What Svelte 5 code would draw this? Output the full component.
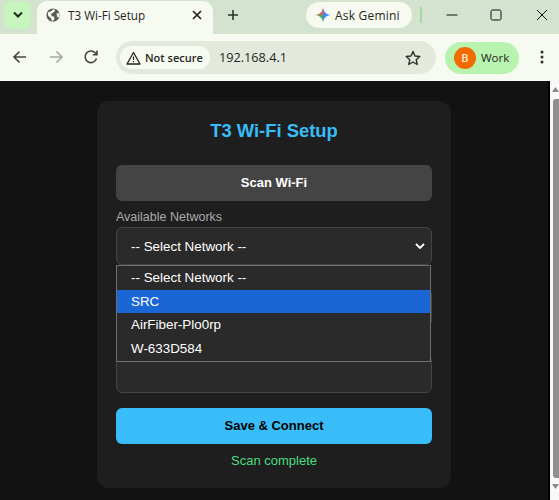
<script>
    let networks = ['-- Select Network --', 'SRC', 'AirFiber-Plo0rp', 'W-633D584'];
    let highlighted = 1;
</script>

<div class="window">
    <header class="chrome">
        <div class="tabstrip">
            <button class="tab-list" aria-label="Search tabs">
                <svg width="12" height="8" viewBox="0 0 12 8"><path d="M2 1.500 6 5.500 10 1.500" fill="none" stroke="#1c2a1c" stroke-width="2"/></svg>
            </button>
            <div class="tab">
                <svg class="globe" width="14" height="14" viewBox="0 0 16 16">
                    <circle cx="8" cy="8" r="7.500" fill="#545a56"/>
                    <path d="M2 5 6 3.500 9 1 10.500 3 8 5.500 5.500 7 7 9.500 9.500 10 9.500 13 7 15 5.500 11.500 2.500 9Z" fill="#f6faf0"/>
                    <path d="M12 6 15 6 15 10 13 11Z" fill="#f6faf0"/>
                </svg>
                <span class="tab-title">T3 Wi-Fi Setup</span>
                <svg class="tab-close" width="10" height="10" viewBox="0 0 10 10"><path d="M1 1 9 9M9 1 1 9" stroke="#222" stroke-width="1.700"/></svg>
            </div>
            <svg class="new-tab" width="12" height="12" viewBox="0 0 12 12"><path d="M6 1V11M1 6H11" stroke="#2b352b" stroke-width="1.600"/></svg>
            <div class="gemini">
                <svg width="16" height="16" viewBox="0 0 16 16">
                    <path d="M8 0C8.300 4.500 11 7.600 16 8L8 8Z" fill="#4285f4"/>
                    <path d="M16 8C11 8.400 8.300 11.500 8 16L8 8Z" fill="#3b8ff0"/>
                    <path d="M8 16C7.700 11.500 5 8.400 0 8L8 8Z" fill="#3fae5a"/>
                    <path d="M0 8C5 7.600 7.700 4.500 8 0L8 8Z" fill="#ea5a47"/>
                </svg>
                <span>Ask Gemini</span>
            </div>
            <span class="divider"></span>
            <div class="win-controls">
                <svg width="12" height="12" viewBox="0 0 12 12"><path d="M0.500 6H11.500" stroke="#111" stroke-width="1"/></svg>
                <svg width="12" height="12" viewBox="0 0 12 12"><rect x="1" y="1" width="10" height="10" rx="1.500" fill="none" stroke="#111" stroke-width="1"/></svg>
                <svg class="win-close" width="12" height="12" viewBox="0 0 12 12"><path d="M1 1 11 11M11 1 1 11" stroke="#111" stroke-width="1"/></svg>
            </div>
        </div>
        <div class="toolbar">
            <svg class="nav" width="16" height="16" viewBox="0 0 16 16"><path d="M14 8H2.500M7.500 2.500 2 8 7.500 13.500" fill="none" stroke="#3c463c" stroke-width="1.600"/></svg>
            <svg class="nav" width="16" height="16" viewBox="0 0 16 16"><path d="M2 8H13.500M8.500 2.500 14 8 8.500 13.500" fill="none" stroke="#a3aaa2" stroke-width="1.600"/></svg>
            <svg class="nav" width="16" height="16" viewBox="0 0 16 16"><path d="M13.500 9.500A5.800 5.800 0 1 1 12.200 3.800L14 5.500M14 1.500V5.700H9.800" fill="none" stroke="#3c463c" stroke-width="1.600"/></svg>
            <div class="omnibox">
                <div class="chip">
                    <svg width="15" height="14" viewBox="0 0 15 14"><path d="M7.500 1.500 14 13H1Z" fill="none" stroke="#222" stroke-width="1.300" stroke-linejoin="round"/><path d="M7.500 5.500V9M7.500 10V11.300" stroke="#222" stroke-width="1.200"/></svg>
                    <span class="raised">Not secure</span>
                </div>
                <span class="url raised">192.168.4.1</span>
                <svg class="star" width="16" height="16" viewBox="0 0 16 16"><path d="M8 1.500 10 6 14.800 6.500 11.200 9.700 12.200 14.500 8 12 3.800 14.500 4.800 9.700 1.200 6.500 6 6Z" fill="none" stroke="#2a332a" stroke-width="1.400" stroke-linejoin="round"/></svg>
            </div>
            <div class="profile">
                <span class="avatar">B</span>
                <span class="raised">Work</span>
            </div>
            <svg class="kebab" width="4" height="14" viewBox="0 0 4 14"><circle cx="2" cy="2" r="1.500" fill="#2a332a"/><circle cx="2" cy="7" r="1.500" fill="#2a332a"/><circle cx="2" cy="12" r="1.500" fill="#2a332a"/></svg>
        </div>
    </header>

    <div class="viewport">
        <main class="page">
            <section class="card">
                <h2>T3 Wi-Fi Setup</h2>
                <button class="btn scan">Scan Wi-Fi</button>
                <div class="label">Available Networks</div>
                <div class="select-wrap">
                    <div class="select">
                        <span>-- Select Network --</span>
                        <svg width="10" height="7" viewBox="0 0 10 7"><path d="M1 1 5 5 9 1" fill="none" stroke="#fff" stroke-width="1.800"/></svg>
                    </div>
                    <ul class="popup">
                        {#each networks as net, i}
                            <li class:active={i === highlighted}>{net}</li>
                        {/each}
                    </ul>
                </div>
                <div class="input ssid"></div>
                <div class="input pass"></div>
                <button class="btn save">Save &amp; Connect</button>
                <div class="status">Scan complete</div>
            </section>
        </main>
        <aside class="scrollbar">
            <svg width="7" height="5" viewBox="0 0 7 5"><path d="M3.500 0 7 5H0Z" fill="#8a8a8a"/></svg>
            <div class="thumb"></div>
            <svg width="7" height="5" viewBox="0 0 7 5"><path d="M0 0H7L3.500 5Z" fill="#8a8a8a"/></svg>
        </aside>
    </div>
</div>

<style>
    :global(body) {
        margin: 0;
        overflow: hidden;
    }

    .window {
        width: 559px;
        height: 500px;
        display: flex;
        flex-direction: column;
        font-family: 'Liberation Sans', Arial, sans-serif;
    }

    .chrome {
        font-family: 'Open Sans', sans-serif;
        color: #1f261f;
    }

    .tabstrip {
        height: 34px;
        background: #d3e3cf;
        display: flex;
        align-items: flex-start;
        position: relative;
    }

    .tab-list {
        width: 27px;
        height: 28px;
        margin: 1px 0 0 4px;
        padding: 0;
        border: none;
        border-radius: 8px;
        background: #c6f5bd;
        display: flex;
        align-items: center;
        justify-content: center;
    }

    .tab {
        width: 176px;
        height: 33px;
        margin: 1px 0 0 6px;
        padding: 0 9px 5px 9px;
        box-sizing: border-box;
        background: #f6faf0;
        border-radius: 10px 10px 0 0;
        display: flex;
        align-items: center;
    }

    .globe {
        flex: none;
    }

    .tab-title {
        margin-left: 8px;
        font-size: 11.700px;
        flex: 1;
        white-space: nowrap;
    }

    .tab-close {
        margin-right: 2px;
    }

    .new-tab {
        margin: 9px 0 0 14px;
    }

    .gemini {
        width: 106px;
        height: 26px;
        margin: 2px 0 0 67px;
        box-sizing: border-box;
        padding-left: 9px;
        border-radius: 13px;
        background: #f6faf0;
        display: flex;
        align-items: center;
        gap: 4px;
        font-size: 12px;
        font-weight: 500;
        letter-spacing: 0.2px;
    }

    .divider {
        width: 2px;
        height: 16px;
        margin: 7px 0 0 8px;
        background: #a4d9a0;
    }

    .win-controls {
        margin: 9px 0 0 24px;
        display: flex;
        gap: 32px;
    }

    .win-close {
        margin-left: 2px;
    }

    .toolbar {
        height: 47px;
        background: #f6faf0;
        display: flex;
        align-items: center;
        position: relative;
    }

    .nav {
        margin: 0 8px 1px 12px;
        flex: none;
    }

    .nav + .nav {
        margin-left: 12px;
        margin-right: 7px;
    }

    .raised {
        margin-bottom: 1px;
    }

    .omnibox {
        width: 320px;
        height: 33px;
        margin-left: 10px;
        box-sizing: border-box;
        padding: 0 15px 0 4px;
        background: #e3e9dd;
        border-radius: 17px;
        display: flex;
        align-items: center;
    }

    .chip {
        width: 90px;
        height: 23px;
        box-sizing: border-box;
        padding-left: 6px;
        background: #f6faf0;
        border-radius: 12px;
        display: flex;
        align-items: center;
        gap: 4px;
        font-size: 11px;
        font-weight: 600;
        white-space: nowrap;
    }

    .url {
        margin-left: 9px;
        font-size: 12.700px;
        flex: 1;
    }

    .profile {
        width: 74px;
        height: 32px;
        margin-left: 9px;
        box-sizing: border-box;
        padding-left: 9px;
        background: #b9f3b0;
        border-radius: 16px;
        display: flex;
        align-items: center;
        gap: 5px;
        font-size: 11.500px;
    }

    .avatar {
        width: 22px;
        height: 22px;
        border-radius: 50%;
        background: #f26b00;
        color: #ffe9d8;
        font-size: 11px;
        font-weight: 600;
        display: flex;
        align-items: center;
        justify-content: center;
    }

    .kebab {
        margin: 0 0 1px 21px;
    }

    .viewport {
        flex: 1;
        min-height: 0;
        display: flex;
    }

    .page {
        flex: 1;
        background: #121212;
        border-right: 2px solid #000;
        padding-top: 20px;
        display: flex;
        justify-content: center;
        align-items: flex-start;
    }

    .card {
        width: 354px;
        height: 387px;
        box-sizing: border-box;
        padding: 19px;
        background: #1e1e1e;
        border-radius: 12px;
        display: flex;
        flex-direction: column;
    }

    h2 {
        margin: 0 0 23px;
        text-align: center;
        color: #38bdf8;
        font-size: 18.400px;
        line-height: 22px;
        font-weight: 700;
    }

    .btn {
        display: block;
        width: 100%;
        height: 36px;
        padding: 0 0 2px;
        border: none;
        border-radius: 6px;
        font-family: inherit;
        font-size: 13px;
        font-weight: 700;
    }

    .scan {
        background: #444;
        color: #fff;
    }

    .label {
        margin-top: 9px;
        color: #aaa;
        font-size: 12.500px;
        line-height: 15px;
        margin-bottom: 2px;
    }

    .select-wrap {
        position: relative;
    }

    .select {
        height: 38px;
        box-sizing: border-box;
        padding: 0 6px 0 14px;
        background: #2a2a2a;
        border: 1px solid #444;
        border-radius: 6px;
        color: #fff;
        font-size: 13.400px;
        display: flex;
        align-items: center;
        justify-content: space-between;
    }

    .popup {
        position: absolute;
        top: 38px;
        left: 0;
        right: 1px;
        z-index: 2;
        margin: 0;
        padding: 0;
        list-style: none;
        box-sizing: border-box;
        height: 97px;
        background: #2a2a2a;
        border: 1px solid #6f6f6f;
        color: #fff;
        font-size: 13.400px;
    }

    .popup li {
        height: 23.700px;
        line-height: 23.700px;
        padding-left: 14px;
    }

    .popup li.active {
        background: #1a66d4;
    }

    .input {
        height: 38px;
        box-sizing: border-box;
        background: #2a2a2a;
        border: 1px solid #444;
        border-radius: 6px;
    }

    .ssid {
        margin-top: 23px;
    }

    .pass {
        margin-top: 29px;
    }

    .save {
        margin-top: 15px;
        background: #38bdf8;
        color: #000;
    }

    .status {
        margin-top: 9px;
        text-align: center;
        color: #4ade80;
        font-size: 13px;
        line-height: 16px;
    }

    .scrollbar {
        width: 9px;
        box-sizing: border-box;
        background: #f8f8f8;
        display: flex;
        flex-direction: column;
        align-items: flex-end;
    }

    .scrollbar svg {
        margin-top: 6px;
    }

    .thumb {
        width: 6px;
        height: 379px;
        margin-top: 7px;
        background: #8f8f8f;
        border-radius: 3px 0 0 3px;
    }
</style>
